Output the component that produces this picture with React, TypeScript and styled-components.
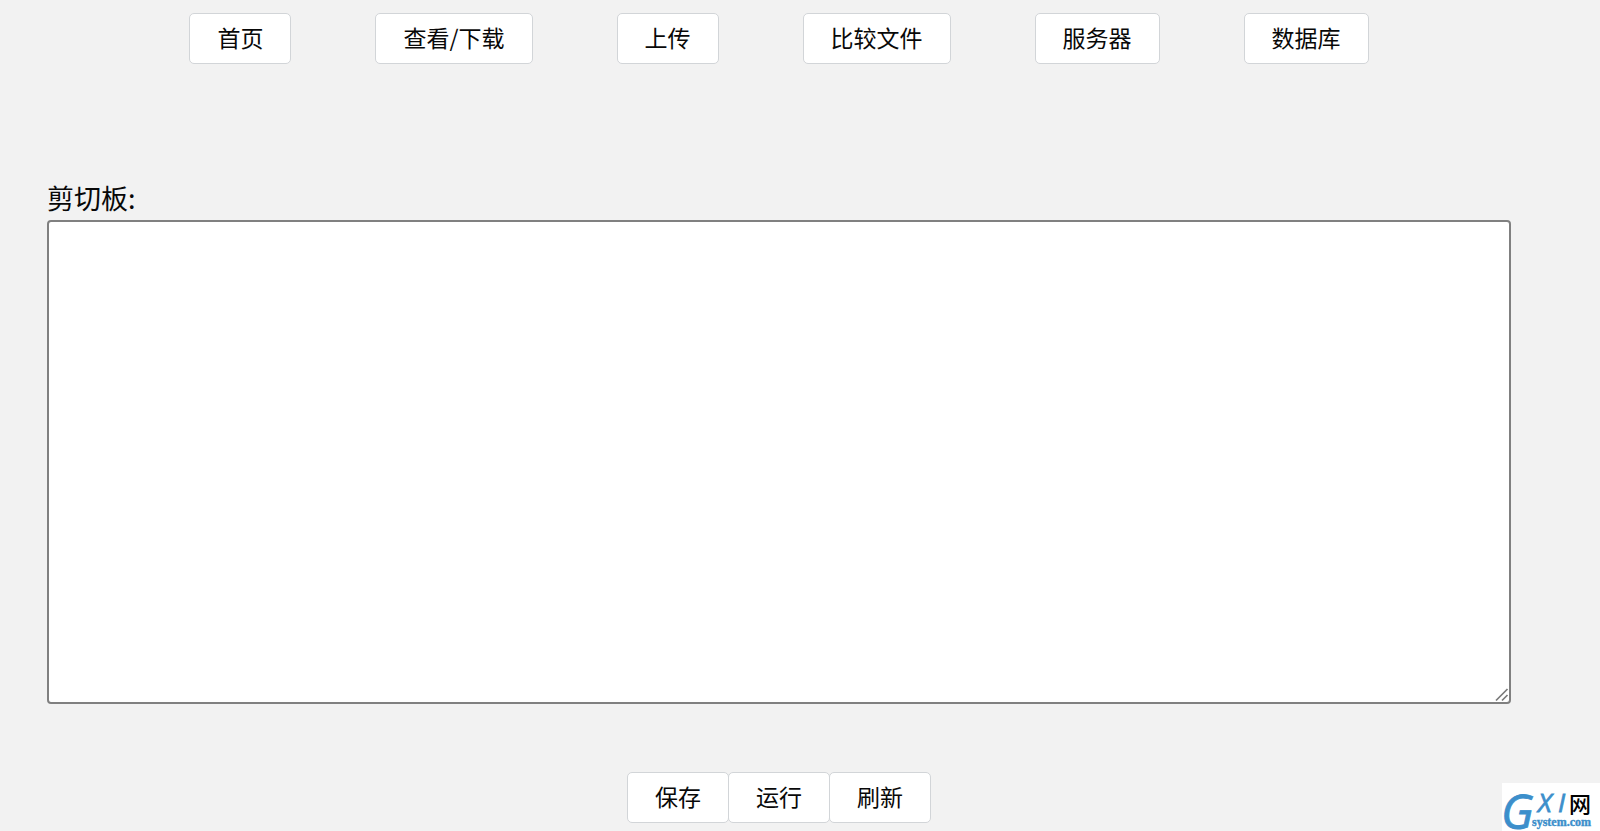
import React, { useState } from "react";
import styled, { createGlobalStyle } from "styled-components";

const GlobalStyle = createGlobalStyle`
  *, *::before, *::after { box-sizing: border-box; }
  body {
    margin: 0;
    background: #f2f2f2;
    color: #080808;
    font-family: "Noto Sans CJK SC", "Noto Sans", sans-serif;
  }
`;

const Page = styled.div`
  min-height: 100vh;
  padding: 13px 89px 8px 47px;
  display: flex;
  flex-direction: column;
`;

const Nav = styled.nav`
  display: flex;
  flex-wrap: wrap;
  justify-content: center;
  gap: 16px 84px;
`;

const Button = styled.button`
  height: 51px;
  padding: 0 27px 3px;
  border: 1px solid #d2d5d8;
  border-radius: 5px;
  background: #fff;
  color: #080808;
  font: inherit;
  font-size: 23px;
  line-height: 32px;
  white-space: nowrap;
  cursor: pointer;

  &:hover { background: #fafafa; }
`;

const Clipboard = styled.main`
  flex: 1;
  display: flex;
  flex-direction: column;
  padding-top: 116px;
`;

const Label = styled.label`
  padding-bottom: 4px;
  font-size: 27px;
  line-height: 36px;
`;

const Editor = styled.div`
  position: relative;
  flex: 1;
  display: flex;
  min-height: 200px;
`;

const TextArea = styled.textarea`
  width: 100%;
  padding: 4px;
  border: 2px solid #808080;
  border-radius: 4px;
  background: #fff;
  font: inherit;
  font-size: 23px;
  resize: vertical;
  outline: none;

  &::-webkit-resizer { display: none; }
`;

const Grip = styled.svg`
  position: absolute;
  right: 2px;
  bottom: 2px;
  width: 14px;
  height: 14px;
  pointer-events: none;
`;

const Actions = styled.div`
  display: flex;
  justify-content: center;
  padding-top: 68px;

  ${Button} + ${Button} { margin-left: -1px; }
`;

const Logo = styled.svg`
  position: fixed;
  right: 0;
  bottom: 0;
  width: 98px;
  height: 48px;
  background: #fff;
`;

const sections = ["首页", "查看/下载", "上传", "比较文件", "服务器", "数据库"];
const actions = ["保存", "运行", "刷新"];

export default function App() {
  const [text, setText] = useState("");
  return (
    <>
      <GlobalStyle />
      <Page>
        <Nav>
          {sections.map((name) => (
            <Button key={name} type="button">{name}</Button>
          ))}
        </Nav>
        <Clipboard>
          <Label htmlFor="clipboard">剪切板:</Label>
          <Editor>
            <TextArea id="clipboard" value={text} onChange={(e) => setText(e.target.value)} />
            <Grip viewBox="0 0 14 14" fill="none" stroke="#7a7a7a" strokeWidth="1.7" aria-hidden="true">
              <path d="M1 12.5 12.5 1M7 12.5l5.5-5.5" />
            </Grip>
          </Editor>
          <Actions>
            {actions.map((name) => (
              <Button key={name} type="button">{name}</Button>
            ))}
          </Actions>
        </Clipboard>
      </Page>
      <Logo viewBox="0 0 98 48" role="img" aria-label="GXI网 system.com">
        <g fill="#3c8fcb" stroke="#3c8fcb">
          <text x="-1" y="46" strokeWidth="0.8" fontFamily="'Liberation Sans Narrow', 'Open Sans', sans-serif" fontStyle="italic" fontSize="48">G</text>
          <text x="36" y="29" strokeWidth="0.8" fontFamily="'Open Sans', sans-serif" fontStyle="italic" fontSize="26">X</text>
          <text x="56" y="29" strokeWidth="0.8" fontFamily="'Open Sans', sans-serif" fontStyle="italic" fontSize="26">I</text>
          <text x="30" y="43" strokeWidth="0.4" fontFamily="'Liberation Serif', serif" fontWeight="700" fontSize="12">system.com</text>
        </g>
        <text x="67" y="29" fill="#000" fontFamily="'Noto Sans CJK SC', sans-serif" fontWeight="500" fontSize="22">网</text>
      </Logo>
    </>
  );
}
